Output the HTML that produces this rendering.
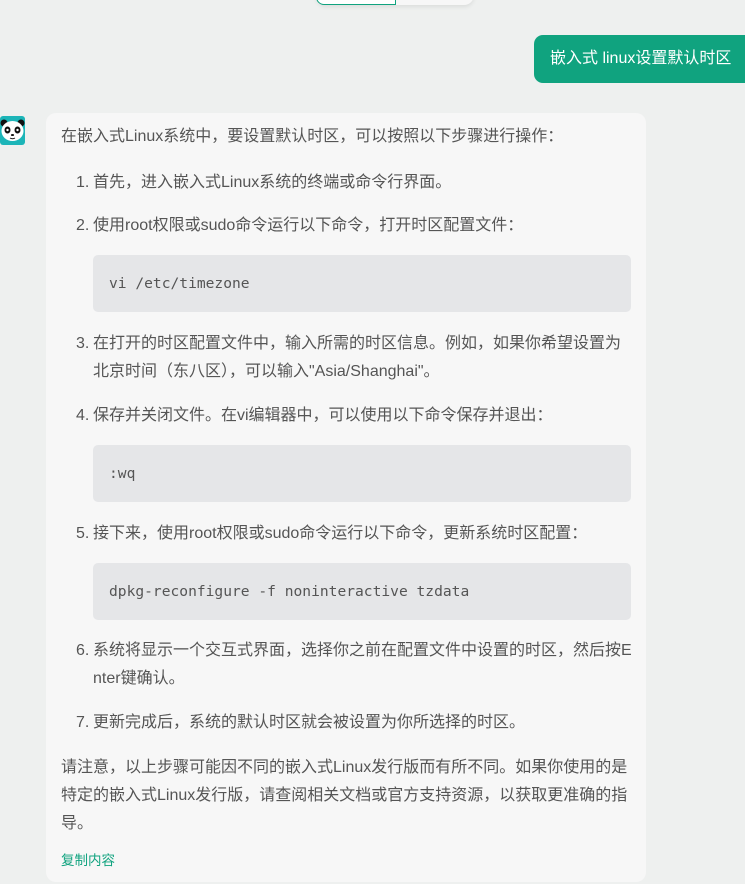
<!DOCTYPE html>
<html><head><meta charset="utf-8"><style>
body{margin:0;width:745px;height:884px;background:#eef0ef;position:relative;overflow:hidden;font-family:"Liberation Sans","Noto Sans CJK SC",sans-serif;color:#555;font-size:16px}
.t{position:absolute;white-space:nowrap;line-height:20px}
.code{position:absolute;left:93px;width:538px;height:57px;background:#e5e6e8;border-radius:5px;font-family:"DejaVu Sans Mono",monospace;font-size:14.6px;line-height:57px;text-indent:16px;color:#555}
.n{position:absolute;left:76px}
</style></head><body>
<div style="position:absolute;left:316px;top:-20px;width:158px;height:25px;background:#f7f7f7;border-radius:0 0 10px 10px;box-shadow:0 2px 4px rgba(0,0,0,.08)"></div>
<div style="position:absolute;left:316px;top:-20px;width:80px;height:25px;border:1px solid #10a37f;border-radius:0 0 0 8px;box-sizing:border-box;background:#fff"></div>
<div style="position:absolute;left:534px;top:35px;width:211px;height:48px;background:#10a37f;border-radius:9px 0 0 9px"></div>
<div class="t" style="left:550px;top:49px;color:#fff;font-size:16px">嵌入式 linux设置默认时区</div>
<div style="position:absolute;left:0;top:116px;width:25px;height:29px;background:#1cb5b8;border-radius:3px;overflow:hidden">
<svg width="25" height="29" viewBox="0 0 25 29"><circle cx="4" cy="7" r="3.5" fill="#111"/><circle cx="21" cy="7" r="3.5" fill="#111"/><ellipse cx="12.5" cy="15" rx="11" ry="10" fill="#fff"/><ellipse cx="7.5" cy="14" rx="3" ry="3.5" fill="#111"/><ellipse cx="17.5" cy="14" rx="3" ry="3.5" fill="#111"/><circle cx="7.5" cy="14" r="1.2" fill="#fff"/><circle cx="17.5" cy="14" r="1.2" fill="#fff"/><ellipse cx="12.5" cy="19" rx="1.6" ry="1" fill="#111"/><path d="M10 22q2.5 1.5 5 0" stroke="#111" fill="none"/></svg></div>
<div style="position:absolute;left:46px;top:113px;width:600px;height:769px;background:#f7f7f7;border-radius:10px"></div>
<div class="t" style="left:61px;top:127px">在嵌入式Linux系统中，要设置默认时区，可以按照以下步骤进行操作：</div>
<div class="t n" style="top:173px">1.</div><div class="t" style="left:93px;top:173px">首先，进入嵌入式Linux系统的终端或命令行界面。</div>
<div class="t n" style="top:216px">2.</div><div class="t" style="left:93px;top:216px">使用root权限或sudo命令运行以下命令，打开时区配置文件：</div>
<div class="code" style="top:255px">vi /etc/timezone</div>
<div class="t n" style="top:334px">3.</div><div class="t" style="left:93px;top:334px">在打开的时区配置文件中，输入所需的时区信息。例如，如果你希望设置为</div>
<div class="t" style="left:93px;top:362px">北京时间（东八区），可以输入"Asia/Shanghai"。</div>
<div class="t n" style="top:406px">4.</div><div class="t" style="left:93px;top:406px">保存并关闭文件。在vi编辑器中，可以使用以下命令保存并退出：</div>
<div class="code" style="top:445px">:wq</div>
<div class="t n" style="top:524px">5.</div><div class="t" style="left:93px;top:524px">接下来，使用root权限或sudo命令运行以下命令，更新系统时区配置：</div>
<div class="code" style="top:563px">dpkg-reconfigure -f noninteractive tzdata</div>
<div class="t n" style="top:641px">6.</div><div class="t" style="left:93px;top:641px">系统将显示一个交互式界面，选择你之前在配置文件中设置的时区，然后按E</div>
<div class="t" style="left:93px;top:669px">nter键确认。</div>
<div class="t n" style="top:713px">7.</div><div class="t" style="left:93px;top:713px">更新完成后，系统的默认时区就会被设置为你所选择的时区。</div>
<div class="t" style="left:61px;top:758px">请注意，以上步骤可能因不同的嵌入式Linux发行版而有所不同。如果你使用的是</div>
<div class="t" style="left:61px;top:786px">特定的嵌入式Linux发行版，请查阅相关文档或官方支持资源，以获取更准确的指</div>
<div class="t" style="left:61px;top:814px">导。</div>
<div class="t" style="left:61px;top:851px;color:#10a37f;font-size:13.5px">复制内容</div>
</body></html>
